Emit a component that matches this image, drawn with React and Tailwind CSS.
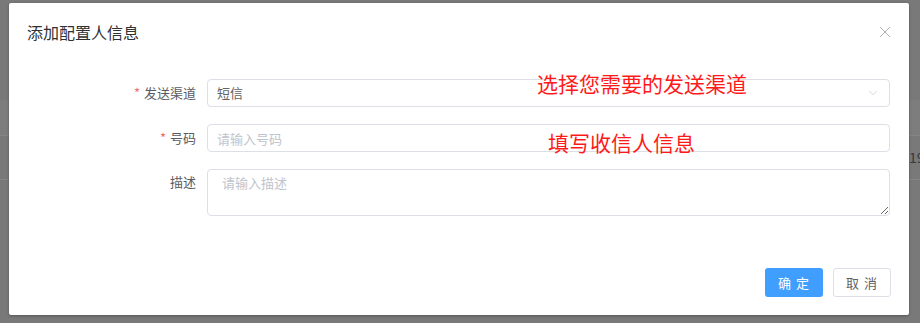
import { ChevronDown, X } from 'lucide-react';

const font = { fontFamily: '"Noto Sans CJK SC", "Noto Sans", sans-serif' };

function FormRow({ label, required, children, top }) {
    return (
        <div className={`flex ${top ? 'items-start' : 'items-center'}`}>
            <label className={`w-[178px] shrink-0 pr-[11px] text-right text-[13px] text-[#5a5c61] ${top ? 'pt-[3px]' : ''}`}>
                {required && <span className="mr-[4px] text-[#f56c6c]">*</span>}
                {label}
            </label>
            <div className="flex-1">{children}</div>
        </div>
    );
}

export default function App() {
    return (
        <div className="relative h-[323px] w-[920px] overflow-hidden bg-[#797979]" style={font}>
            {/* table behind the overlay */}
            <div className="absolute left-0 right-0 top-[100px] h-[35px] bg-[#7d7d7d]" />
            <div className="absolute left-0 right-0 top-[135px] h-px bg-[#858585]" />
            <div className="absolute left-0 right-0 top-[179px] h-px bg-[#858585]" />
            <div className="absolute left-[909px] top-[147px] text-[14px] text-[#3a3a3a]">19</div>

            {/* dialog */}
            <div className="absolute left-[9px] top-[3px] flex h-[312px] w-[900px] flex-col rounded-[2px] bg-white shadow-[0_1px_3px_rgba(0,0,0,0.3)]">
                <div className="flex items-center justify-between pl-[18px] pr-[15px] pt-[17px]">
                    <span className="text-[16px] leading-[24px] text-[#303133]">添加配置人信息</span>
                    <X size={18} strokeWidth={1} className="text-[#909399]" />
                </div>

                <div className="relative flex flex-col gap-[17px] pl-[20px] pr-[19px] pt-[35px]">
                    <FormRow label="发送渠道" required>
                        <div className="flex h-[28px] items-center justify-between rounded-[4px] border border-[#dcdfe6] pl-[9px] pr-[9px] text-[13px] text-[#606266]">
                            <span>短信</span>
                            <ChevronDown size={14} strokeWidth={1.2} className="text-[#c0c4cc]" />
                        </div>
                    </FormRow>
                    <FormRow label="号码" required>
                        <input
                            className="h-[28px] w-full rounded-[4px] border border-[#dcdfe6] px-[9px] text-[13px] text-[#606266] outline-none placeholder:text-[#c0c4cc]"
                            placeholder="请输入号码"
                            style={font}
                        />
                    </FormRow>
                    <FormRow label="描述" top>
                        <textarea
                            className="block h-[47px] w-full rounded-[4px] border border-[#dcdfe6] px-[14px] py-[3px] text-[13px] leading-[20px] text-[#606266] outline-none placeholder:text-[#c0c4cc]"
                            placeholder="请输入描述"
                            style={font}
                        />
                    </FormRow>

                    {/* annotations */}
                    <div className="pointer-events-none absolute left-[528px] top-[27px] text-[21px] leading-[24px] text-[#ff1a1a]">选择您需要的发送渠道</div>
                    <div className="pointer-events-none absolute left-[539px] top-[86px] text-[21px] leading-[24px] text-[#ff1a1a]">填写收信人信息</div>
                </div>

                <div className="mt-auto flex justify-end gap-[10px] pb-[18px] pr-[18px]">
                    <button className="h-[29px] w-[58px] rounded-[3px] bg-[#409eff] pl-[4px] text-[13px] tracking-[5px] text-white" style={font}>
                        确定
                    </button>
                    <button className="h-[29px] w-[58px] rounded-[3px] border border-[#dcdfe6] bg-white pl-[4px] text-[13px] tracking-[5px] text-[#606266]" style={font}>
                        取消
                    </button>
                </div>
            </div>
        </div>
    );
}
